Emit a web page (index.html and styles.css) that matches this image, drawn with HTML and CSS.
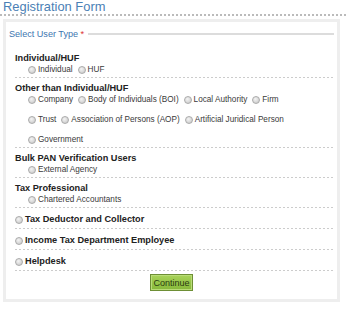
FILE: index.html
```html
<!DOCTYPE html>
<html>
<head>
<meta charset="utf-8">
<link rel="stylesheet" href="styles.css">
</head>
<body>
<h1 class="title">Registration Form</h1>
<div class="box">
  <div class="legend"><span class="legend-text">Select User Type <span class="req">*</span></span><span class="legend-line"></span></div>

  <div class="section">
    <div class="heading">Individual/HUF</div>
    <div class="row"><label class="opt"><span class="radio"></span>Individual</label><label class="opt"><span class="radio"></span>HUF</label></div>
  </div>

  <div class="section">
    <div class="heading">Other than Individual/HUF</div>
    <div class="row"><label class="opt"><span class="radio"></span>Company</label><label class="opt"><span class="radio"></span>Body of Individuals (BOI)</label><label class="opt"><span class="radio"></span>Local Authority</label><label class="opt"><span class="radio"></span>Firm</label></div>
    <div class="row wrap"><label class="opt"><span class="radio"></span>Trust</label><label class="opt"><span class="radio"></span>Association of Persons (AOP)</label><label class="opt"><span class="radio"></span>Artificial Juridical Person</label></div>
    <div class="row wrap"><label class="opt"><span class="radio"></span>Government</label></div>
  </div>

  <div class="section">
    <div class="heading">Bulk PAN Verification Users</div>
    <div class="row"><label class="opt"><span class="radio"></span>External Agency</label></div>
  </div>

  <div class="section">
    <div class="heading">Tax Professional</div>
    <div class="row"><label class="opt"><span class="radio"></span>Chartered Accountants</label></div>
  </div>

  <div class="section single"><label class="opt bold"><span class="radio"></span>Tax Deductor and Collector</label></div>
  <div class="section single"><label class="opt bold"><span class="radio"></span>Income Tax Department Employee</label></div>
  <div class="section single"><label class="opt bold"><span class="radio"></span>Helpdesk</label></div>

  <div class="actions"><button class="btn">Continue</button></div>
</div>
</body>
</html>
```

FILE: styles.css
```css
html, body {
  margin: 0;
  padding: 0;
  background: #fff;
}
body {
  font-family: "Liberation Sans", Arial, sans-serif;
  color: #222;
  width: 347px;
  height: 310px;
  overflow: hidden;
}
.title {
  margin: 0;
  padding: 0 0 2px 3px;
  font-size: 12.9px;
  font-weight: normal;
  line-height: 14px;
  color: #4a7fb5;
  height: 14px;
  background: linear-gradient(to right, #bbb 2px, transparent 2px) repeat-x left bottom / 4px 2px;
}
.box {
  margin: 3px 7px 0 3px;
  border: 3px solid #eeeeee;
  height: 283px;
  padding: 0 3px 0 3px;
  box-sizing: border-box;
}
.legend {
  display: flex;
  align-items: center;
  height: 22px;
  margin-top: 1px;
  margin-bottom: 3px;
}
.legend-text {
  font-size: 9.1px;
  color: #3d75b0;
  white-space: nowrap;
}
.req {
  color: #d33;
}
.legend-line {
  flex: 1;
  height: 2px;
  background: #dcdcdc;
  margin-left: 4px;
}
.section {
  margin: 0 0 0 6px;
  padding: 5px 0 3px 0;
  background: linear-gradient(to right, #ccc 2px, transparent 2px) repeat-x left bottom / 4px 1px;
}
.heading {
  font-size: 9.2px;
  font-weight: bold;
  line-height: 11px;
  color: #222;
}
.row {
  display: flex;
  align-items: center;
  gap: 5px;
  padding-left: 13px;
  height: 11px;
}
.row.wrap {
  margin-top: 9px;
}
.opt {
  display: flex;
  align-items: center;
  font-size: 8.2px;
  line-height: 11px;
  color: #3a3a3a;
  white-space: nowrap;
}
.opt.bold {
  font-size: 9.2px;
  font-weight: bold;
  color: #222;
}
.section.single {
  padding: 6px 0 4px 0;
}
.radio {
  width: 6px;
  height: 6px;
  border: 1px solid #ababab;
  border-radius: 50%;
  background: radial-gradient(circle at 40% 35%, #f4f4f4 0, #d9d9d9 55%, #c4c4c4 100%);
  margin-right: 2px;
  flex: none;
}
.actions {
  display: flex;
  justify-content: center;
  padding-top: 3px;
}
.btn {
  font-family: "Liberation Sans", Arial, sans-serif;
  font-size: 9px;
  color: #2a3a10;
  width: 43px;
  height: 17px;
  padding: 0;
  border: 1px solid #6e8f35;
  background: linear-gradient(#a9d35a, #86b83a);
  box-shadow: inset 0 0 0 1px #b9dc78;
}
```
